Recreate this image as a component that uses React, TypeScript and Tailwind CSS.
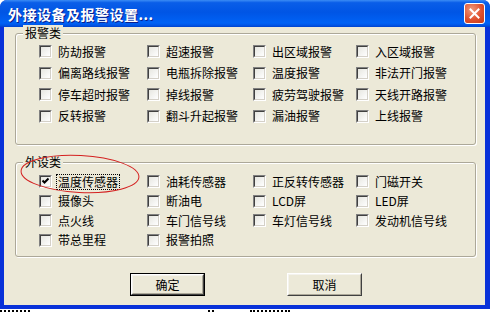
import React from "react";

const alarms = [
  ["防劫报警", "超速报警", "出区域报警", "入区域报警"],
  ["偏离路线报警", "电瓶拆除报警", "温度报警", "非法开门报警"],
  ["停车超时报警", "掉线报警", "疲劳驾驶报警", "天线开路报警"],
  ["反转报警", "翻斗升起报警", "漏油报警", "上线报警"],
];

const devices = [
  ["温度传感器", "油耗传感器", "正反转传感器", "门磁开关"],
  ["摄像头", "断油电", "LCD屏", "LED屏"],
  ["点火线", "车门信号线", "车灯信号线", "发动机信号线"],
  ["带总里程", "报警拍照", "", ""],
];

function Box({ checked }: { checked?: boolean }) {
  return (
    <span className="relative inline-block w-[13px] h-[13px] shrink-0 border border-t-[#808080] border-l-[#808080] border-b-white border-r-white">
      <span className="absolute inset-0 border border-t-[#404040] border-l-[#404040] border-b-[#D4D0C8] border-r-[#D4D0C8] bg-gradient-to-br from-[#E6E6E0] to-white" />
      {checked && (
        <svg className="absolute left-[1px] top-[1px]" width="9" height="9" viewBox="0 0 9 9">
          <path d="M1.5 3.5 L3.5 5.5 L7.5 1.5" stroke="#000" strokeWidth="2" fill="none" />
        </svg>
      )}
    </span>
  );
}

function Item({ label, checked, focus }: { label: string; checked?: boolean; focus?: boolean }) {
  if (!label) return <div />;
  return (
    <div className="flex items-center gap-[4px]">
      <Box checked={checked} />
      <span
        className={
          "text-[12px] leading-[14px] text-black px-[1px] " +
          (focus ? "border border-dotted border-black" : "border border-transparent")
        }
      >
        {label}
      </span>
    </div>
  );
}

function Group({
  title,
  rows,
  height,
  rowH,
  pt,
}: {
  title: string;
  rows: string[][];
  height: string;
  rowH: string;
  pt: string;
}) {
  return (
    <div
      className={
        "relative ml-[11px] w-[461px] border border-[#ACA899] rounded-[3px] shadow-[inset_1px_1px_0_#fff,1px_1px_0_#fff] " +
        height
      }
    >
      <span className="absolute -top-[9px] left-[7px] bg-[#ECE9D8] px-[2px] text-[12px] leading-[16px] text-black">
        {title}
      </span>
      <div className={"grid grid-cols-[108px_106px_103px_1fr] pl-[23px] " + pt}>
        {rows.map((r, i) =>
          r.map((l, j) => (
            <div key={i + "-" + j} className={"flex items-center " + rowH}>
              <Item label={l} checked={title === "外设类" && i === 0 && j === 0} focus={title === "外设类" && i === 0 && j === 0} />
            </div>
          ))
        )}
      </div>
    </div>
  );
}

function Btn({ label, def }: { label: string; def?: boolean }) {
  return (
    <div className={"w-[75px] h-[23px] " + (def ? "border border-black" : "")}>
      <div className="w-full h-full border border-t-white border-l-white border-b-[#404040] border-r-[#404040]">
        <div className="w-full h-full border border-t-[#F4F3EE] border-l-[#F4F3EE] border-b-[#ACA899] border-r-[#ACA899] bg-[#ECE9D8] flex items-center justify-center text-[12px] text-black">
          {label}
        </div>
      </div>
    </div>
  );
}

export default function App() {
  return (
    <div className="w-[490px] h-[312px] bg-white overflow-hidden font-['Noto_Sans_CJK_SC','Noto_Sans',sans-serif]">
      <div className="relative w-[490px] h-[309px] flex flex-col bg-[#0831D9] rounded-t-[7px] overflow-hidden">
        {/* title bar */}
        <div className="h-[27px] shrink-0 flex items-center justify-between pl-[8px] pr-[5px] bg-[linear-gradient(to_bottom,#3B8CF5_0%,#0A5EE8_10%,#0055E5_45%,#0062F5_85%,#0056E8_93%,#0042CC_100%)]">
          <span className="text-white font-bold text-[14px] leading-[16px] tracking-[0.5px] [text-shadow:1px_1px_0_#0A1E8C]">
            外接设备及报警设置...
          </span>
          <div className="w-[21px] h-[21px] rounded-[3px] border border-white bg-[radial-gradient(circle_at_35%_30%,#F09A7C,#E0512F_55%,#C23A18)] flex items-center justify-center">
            <svg width="11" height="11" viewBox="0 0 11 11">
              <path d="M1.5 1.5 L9.5 9.5 M9.5 1.5 L1.5 9.5" stroke="#fff" strokeWidth="2" strokeLinecap="square" />
            </svg>
          </div>
        </div>
        {/* client */}
        <div className="flex-1 ml-[4px] mr-[5px] mb-[4px] bg-[#ECE9D8] flex flex-col pt-[6px]">
          <Group title="报警类" rows={alarms} height="h-[112px]" rowH="h-[21.5px]" pt="pt-[7px]" />
          <div className="h-[17px]" />
          <Group title="外设类" rows={devices} height="h-[95px]" rowH="h-[19.5px]" pt="pt-[9px]" />
          <div className="flex gap-[82px] pl-[126px] pt-[16px]">
            <Btn label="确定" def />
            <Btn label="取消" />
          </div>
        </div>
        <svg className="absolute left-0 top-0 pointer-events-none" width="490" height="309">
          <ellipse cx="80" cy="174" rx="59" ry="18.5" transform="rotate(3 80 174)" fill="none" stroke="#D42020" strokeWidth="1" />
        </svg>
      </div>
      <div className="flex h-[3px] items-end">
        <div className="w-[30px] h-[2px] border-t-2 border-dotted border-black" />
        <div className="w-[178px]" />
        <div className="w-[6px] h-[2px] border-t-2 border-dotted border-black" />
        <div className="w-[36px]" />
        <div className="w-[40px] h-[2px] border-t-2 border-dotted border-black" />
      </div>
    </div>
  );
}
